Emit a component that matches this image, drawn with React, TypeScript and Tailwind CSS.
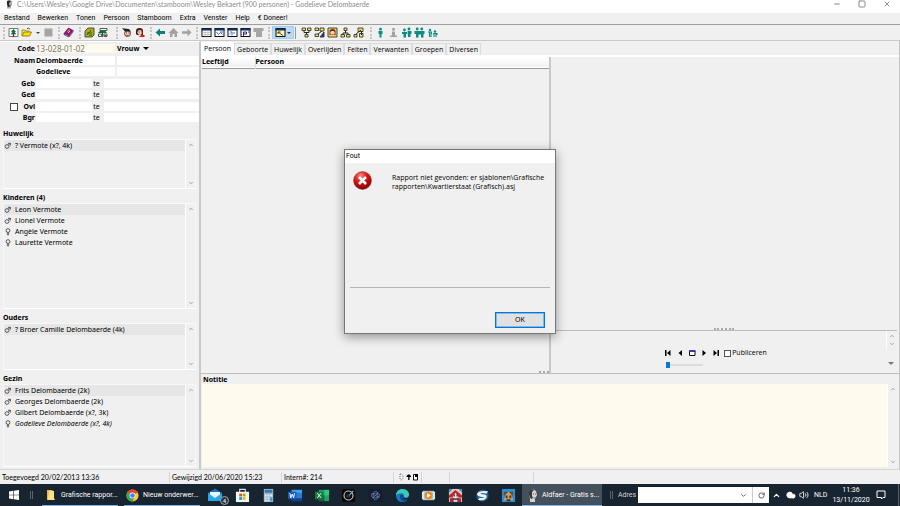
import type { ReactNode } from 'react';
import { ChevronDown, ChevronUp, Cloud, Minus, RotateCw, Square, Volume2, X } from 'lucide-react';

interface Person {
  name: string;
  sex: 'm' | 'f';
  current?: boolean;
}

const MENU = ['Bestand', 'Bewerken', 'Tonen', 'Persoon', 'Stamboom', 'Extra', 'Venster', 'Help', '€ Doneer!'];
const TABS = ['Persoon', 'Geboorte', 'Huwelijk', 'Overlijden', 'Feiten', 'Verwanten', 'Groepen', 'Diversen'];

const SPOUSES: Person[] = [{ name: '? Vermote (x?, 4k)', sex: 'm' }];
const CHILDREN: Person[] = [
  { name: 'Leon Vermote', sex: 'm' },
  { name: 'Lionel Vermote', sex: 'm' },
  { name: 'Angèle Vermote', sex: 'f' },
  { name: 'Laurette Vermote', sex: 'f' },
];
const PARENTS: Person[] = [{ name: '? Broer Camille Delombaerde (4k)', sex: 'm' }];
const FAMILY: Person[] = [
  { name: 'Frits Delombaerde (2k)', sex: 'm' },
  { name: 'Georges Delombaerde (2k)', sex: 'm' },
  { name: 'Gilbert Delombaerde (x?, 3k)', sex: 'm' },
  { name: 'Godelieve Delombaerde (x?, 4k)', sex: 'f', current: true },
];

function Icon({ children }: { children: ReactNode }) {
  return (
    <svg viewBox="0 0 11 11" className="w-[11px] h-[11px] shrink-0">
      {children}
    </svg>
  );
}

function Tool({ label, children }: { label: string; children: ReactNode }) {
  return (
    <button type="button" aria-label={label} className="w-[13px] h-[13px] flex items-center justify-center">
      <Icon>{children}</Icon>
    </button>
  );
}

function Grip() {
  return <span className="w-[2px] h-[12px] mr-[2px] border-l-2 border-dotted border-[#c4c4c4]" />;
}

function Sex({ sex }: { sex: 'm' | 'f' }) {
  return (
    <svg viewBox="0 0 8 8" className="w-2 h-2 shrink-0" fill="none" stroke="#333" strokeWidth="0.8">
      {sex === 'm' ? (
        <>
          <ellipse cx="3" cy="4.5" rx="2" ry="1.8" />
          <path d="M4.4 3.2 6.2 1.4M4 1.3h2.4v2.2" />
        </>
      ) : (
        <>
          <circle cx="4" cy="2.6" r="1.9" />
          <path d="M4 4.5v3M2.8 6h2.4" />
        </>
      )}
    </svg>
  );
}

function ScrollBar() {
  return (
    <div className="w-[10px] shrink-0 flex flex-col items-center justify-between py-[2px] text-[#a5a5a5] border-l border-white">
      <ChevronUp className="w-[6px] h-[6px]" strokeWidth={4} />
      <ChevronDown className="w-[6px] h-[6px]" strokeWidth={4} />
    </div>
  );
}

function PersonList({ title, people, className }: { title: string; people: Person[]; className: string }) {
  return (
    <section className={`flex flex-col ${className}`}>
      <h2 className="h-[13px] leading-[15px] font-bold">{title}</h2>
      <div className="flex-1 min-h-0 flex border border-[#f8f8f8] border-b-white">
        <ul className="flex-1 min-w-0">
          {people.map((p, i) => (
            <li
              key={p.name}
              className={`h-[11px] leading-[11px] flex items-center gap-[3px] whitespace-nowrap ${
                i === 0 ? 'bg-[#e6e6e6]' : ''
              } ${p.current ? 'italic' : ''}`}
            >
              <Sex sex={p.sex} />
              {p.name}
            </li>
          ))}
        </ul>
        <ScrollBar />
      </div>
    </section>
  );
}

function DateRow({ id, label, check }: { id: string; label: string; check?: boolean }) {
  return (
    <div className="flex items-center h-[9px]">
      <div className="w-[35px] flex items-center justify-end gap-[5px] pr-px font-bold">
        {check && (
          <input
            type="checkbox"
            aria-label="Overleden"
            className="appearance-none w-2 h-2 bg-white border border-[#444]"
          />
        )}
        <label htmlFor={id}>{label}</label>
      </div>
      <input id={id} className="w-14 h-[9px] bg-white outline-none" />
      <label htmlFor={`${id}-te`} className="w-3 pr-[3px] text-center">te</label>
      <input id={`${id}-te`} className="flex-1 min-w-0 h-[9px] bg-white outline-none" />
    </div>
  );
}

function PersonForm() {
  return (
    <form className="flex flex-col gap-[2px] pt-[2px] leading-[9px]">
      <div className="flex items-center h-[9px] mb-px">
        <label htmlFor="code" className="w-[35px] pr-px text-right font-bold">Code</label>
        <input
          id="code"
          defaultValue="13-028-01-02"
          className="w-[79px] h-[9px] bg-[#fffaee] text-[8px] text-[#777] outline-none"
        />
        <button type="button" className="flex items-center gap-1 pl-[2px] font-bold">
          Vrouw
          <span className="border-x-[3px] border-x-transparent border-t-[3px] border-t-black" />
        </button>
      </div>
      <div className="flex items-center h-[9px]">
        <label htmlFor="naam" className="w-[35px] pr-px text-right font-bold">Naam</label>
        <input id="naam" defaultValue="Delombaerde" className="w-[79px] h-[9px] bg-white font-bold outline-none" />
        <input aria-label="Voorvoegsel" className="flex-1 min-w-0 h-[9px] ml-[2px] bg-white outline-none" />
      </div>
      <div className="flex items-center h-[9px] pl-[35px] mb-px">
        <input aria-label="Voornaam" defaultValue="Godelieve" className="w-[79px] h-[9px] bg-white font-bold outline-none" />
        <input aria-label="Roepnaam" className="flex-1 min-w-0 h-[9px] ml-[2px] bg-white outline-none" />
      </div>
      <DateRow id="geb" label="Geb" />
      <DateRow id="ged" label="Ged" />
      <div className="h-px -mt-[2px]" />
      <DateRow id="ovl" label="Ovl" check />
      <DateRow id="bgr" label="Bgr" />
    </form>
  );
}

function WindowGlyph({ children, fill = '#fff' }: { children?: ReactNode; fill?: string }) {
  return (
    <>
      <rect x="1" y="1.5" width="9" height="8" fill={fill} stroke="#111" />
      <path d="M.5 2.5h10" stroke="#12305c" strokeWidth="2" />
      {children}
    </>
  );
}

function Toolbar() {
  return (
    <div className="h-[16px] shrink-0 flex items-center pl-[3px] border-b border-[#c9c9c9]">
      <Grip />
      <Tool label="Nieuw">
        <path d="M1 1.5h9v8H1z" fill="#fff" stroke="#777" />
        <path d="M5.5 2 3 5h1.5L2.5 7.3h6L6.5 5H8z" fill="#087038" />
        <path d="M5.5 7v3" stroke="#8a2020" strokeWidth="1.4" />
      </Tool>
      <Tool label="Openen">
        <path d="M1 9V3h3l1 1h3v2" fill="#ffe87c" stroke="#8a7b00" strokeWidth="0.8" />
        <path d="m1 9 2-4h7.5L8.5 9z" fill="#ffe100" stroke="#7c7000" strokeWidth="0.8" />
        <path d="M6 1.8q2-1.5 3 .6" fill="none" stroke="#222" strokeWidth="0.8" />
      </Tool>
      <button type="button" aria-label="Recente bestanden" className="w-[9px] flex justify-center">
        <span className="border-x-2 border-x-transparent border-t-2 border-t-[#444]" />
      </button>
      <Tool label="Opslaan"><path d="M1.5 1.5h8v8h-8z" fill="#a5a5a5" /></Tool>
      <span className="w-[3px]" />
      <Grip />
      <Tool label="Handleiding">
        <path d="M1 6.5 5.5 1 10 3.5 6 9z" fill="#9a1a8a" stroke="#4b0d45" strokeWidth="0.7" />
        <path d="M1 6.5 1.5 8 6 10l4-5V3.500L6 9z" fill="#fff" stroke="#4b0d45" strokeWidth="0.7" />
        <path d="m4.500 4.500 2-1.500M5 6l2-2" stroke="#ffb15a" />
      </Tool>
      <span className="w-1" />
      <Grip />
      <Tool label="Kaart">
        <path d="m1 4 3-3h6v7L8 10H1z" fill="#b3ab15" stroke="#333" strokeWidth="0.8" />
        <path d="M3 8c0-3 4-2 4-5M3 6h5M5 8h3" stroke="#176224" fill="none" strokeWidth="0.9" />
      </Tool>
      <Tool label="Boomweergave">
        <path d="M3 1.5h7v2H3zM1.5 7h3v2.5h-3zM7 7h3v2.500H7z" fill="#fff" stroke="#333" strokeWidth="0.8" />
        <path d="M1 6h9L8 3.500H3.500z" fill="#087038" />
        <path d="M5.500 5v5" stroke="#087038" strokeWidth="1.300" />
        <path d="M7.500 8.500h2" stroke="#b31515" />
      </Tool>
      <span className="w-[7px]" />
      <Grip />
      <Tool label="Man">
        <circle cx="6.5" cy="6.5" r="3" fill="#f4c7b5" stroke="#3a211a" strokeWidth="0.8" />
        <path d="m1 1 2 .5 5 .5 2 2.500H4z" fill="#222" />
        <path d="M5.500 8.500h2" stroke="#c22" strokeWidth="0.9" />
        <path d="M5 6h1M7.500 6h1" stroke="#111" strokeWidth="0.8" />
      </Tool>
      <Tool label="Vrouw">
        <path d="M2 7V4q0-3 3.500-3T9 4v4H3z" fill="#4a1512" />
        <circle cx="5.8" cy="5.5" r="2.400" fill="#f4c7b5" />
        <path d="M4.500 5h1M7 5h1" stroke="#111" strokeWidth="0.7" />
        <path d="M5 10h5.500V8L7.500 7.500z" fill="#d22323" />
      </Tool>
      <span className="w-1" />
      <Grip />
      <Tool label="Vorige"><path d="M.5 5.500 5 1.500v2.500h5v3H5v2.500z" fill="#08807c" /></Tool>
      <Tool label="Start"><path d="M.5 6 5.500 1l5 5H9v4H6.500V7h-2v3H2V6z" fill="#a3a3a3" /></Tool>
      <Tool label="Volgende"><path d="M10.500 5.500 6.500 1.500v2.800H1v2.400h5.500v2.800z" fill="#a3a3a3" /></Tool>
      <span className="w-[3px]" />
      <Grip />
      <Tool label="Tabel">
        <WindowGlyph><path d="M1 5.500h9M1 7.500h9M4 4v5.500M7 4v5.500" stroke="#aaa" strokeWidth="0.6" /></WindowGlyph>
      </Tool>
      <Tool label="Grafiek">
        <WindowGlyph><path d="m2.500 5 2 2.500 2-2 2 2M6 5h3" stroke="#2860d0" strokeWidth="0.9" fill="none" /></WindowGlyph>
      </Tool>
      <Tool label="Kaartje">
        <WindowGlyph><path d="M3 5h2v3.500M7 5v2M2.500 7h1" stroke="#2860d0" strokeWidth="0.9" fill="none" /></WindowGlyph>
      </Tool>
      <Tool label="Rapport">
        <WindowGlyph><path d="M3.500 9V5h3v2h-3M8 5h1" stroke="#2020a0" fill="none" /></WindowGlyph>
      </Tool>
      <Tool label="Sluiten"><path d="M.5 1h10v3H9v6H3V5H.5z" fill="#a5a5a5" /></Tool>
      <span className="w-[3px]" />
      <Grip />
      <button
        type="button"
        aria-label="Grafisch overzicht"
        className="w-[22px] h-[13px] flex items-center justify-between pl-[2px] pr-[2px] bg-[#b9daf5] border border-[#a2cdf0]"
      >
        <Icon>
          <WindowGlyph fill="#fff8a8">
            <path d="m3 5 5 3.500M3 7V5h2.500" stroke="#333" strokeWidth="0.9" fill="none" />
          </WindowGlyph>
        </Icon>
        <span className="border-x-2 border-x-transparent border-t-2 border-t-[#333]" />
      </button>
      <span className="w-px h-[12px] ml-px mr-1 bg-[#999]" />
      <Tool label="Kwartierstaat">
        <path d="M3 3.500v2h5v-2M5.500 5.500v3" stroke="#222" fill="none" />
        <path d="M1 1h3.500v2.500H1zM6.500 1H10v2.500H6.500zM4 7.500h3v2.500H4z" fill="#f4e45a" stroke="#222" strokeWidth="0.8" />
      </Tool>
      <Tool label="Parenteel">
        <path d="M1 1h3.500v2.500H1zM6 1h4v3H6zM1 7h3.500v2.500H1z" fill="#f4e45a" stroke="#222" strokeWidth="0.8" />
        <path d="m4 7 4-3" stroke="#222" />
        <path d="M6 10 10 5v5z" fill="#3a3a90" stroke="#222" strokeWidth="0.8" />
      </Tool>
      <Tool label="Portret">
        <path d="M1 1h9v9H1z" fill="#f2dc5a" stroke="#333" strokeWidth="0.9" />
        <path d="M2.500 8V4.500q0-2.500 3-2.500t3 2.500V8z" fill="#6b1f1f" />
        <circle cx="5.5" cy="6" r="2.300" fill="#ffcdb8" />
        <path d="M4.500 7.500h2" stroke="#d22" strokeWidth="0.8" />
      </Tool>
      <Tool label="Stamboom">
        <path d="M3 7.500V6h5v1.500M5.500 6V3.500" stroke="#222" fill="none" />
        <path d="M4 1h3v2.500H4zM1 7.500h3.500V10H1zM6.500 7.500H10V10H6.500z" fill="#f4e45a" stroke="#222" strokeWidth="0.8" />
      </Tool>
      <Tool label="Afstammelingen">
        <path d="M5 1h5v3.500H5zM1 7.500h3V10H1zM6.500 6.500H10V10H6.500z" fill="#f4e45a" stroke="#222" strokeWidth="0.8" />
        <path d="M2.500 7.500 8 3M8.500 4v4" stroke="#222" />
      </Tool>
      <span className="w-[5px]" />
      <Grip />
      <Tool label="Persoon toevoegen">
        <path d="M3.500 4h4v3H6.500v3.500h-2V7h-1z" fill="#0b8a86" />
        <circle cx="5.5" cy="2.200" r="1.400" fill="#0b8a86" />
      </Tool>
      <Tool label="Persoon verwijderen">
        <circle cx="5.5" cy="2.200" r="1.500" fill="#a3a3a3" />
        <path d="M4 4.500h3v4h2V10H2V8.500h2z" fill="#a3a3a3" />
      </Tool>
      <Tool label="Partner">
        <circle cx="3.5" cy="3" r="1.400" fill="#0b8a86" />
        <circle cx="8" cy="2" r="1.400" fill="#0b8a86" />
        <path d="M1 5h5v2H5v3.500H2.500V7H1zM6.500 4H10.500v3H9.500v3H7z" fill="#0b8a86" />
      </Tool>
      <Tool label="Ouders">
        <circle cx="3.2" cy="2" r="1.400" fill="#0b8a86" />
        <circle cx="7.8" cy="2" r="1.400" fill="#0b8a86" />
        <path d="M.5 4h10v3H9.500v3.500H7V7.500H4.500v3H2V7H.5z" fill="#0b8a86" />
      </Tool>
      <Tool label="Kinderen">
        <circle cx="3" cy="3" r="1.200" fill="#0b8a86" />
        <circle cx="8" cy="4.500" r="1.200" fill="#0b8a86" />
        <path d="M1 5h3.500v2M2.500 5v5M4 6v4M6 6.500h4V8M7 7v3M9 7v3" stroke="#0b8a86" strokeWidth="1.100" fill="none" />
      </Tool>
    </div>
  );
}

function MediaPanel() {
  return (
    <div className="h-[43px] flex border-t border-[#bdbdbd]">
      <div className="flex-1 flex flex-col items-center justify-end gap-[5px] pb-[5px] pr-[5px]">
        <div className="flex items-center gap-[4px] h-2">
          <button type="button" aria-label="Eerste" className="w-2">
            <svg viewBox="0 0 8 8" className="w-2 h-2"><path d="M1 1h1.500v6H1zM6.500 1v6L3 4z" /></svg>
          </button>
          <button type="button" aria-label="Vorige" className="w-2">
            <svg viewBox="0 0 8 8" className="w-2 h-2"><path d="M6 1v6L2.500 4z" /></svg>
          </button>
          <button type="button" aria-label="Venster" className="w-2">
            <svg viewBox="0 0 8 8" className="w-2 h-2">
              <path d="M1.500 2h5.500v4.500H1.500z" fill="#fff" stroke="#111" />
              <path d="M1 2h6.500" stroke="#2727b5" strokeWidth="1.500" />
            </svg>
          </button>
          <button type="button" aria-label="Volgende" className="w-2">
            <svg viewBox="0 0 8 8" className="w-2 h-2"><path d="M2.500 1v6L6 4z" /></svg>
          </button>
          <button type="button" aria-label="Laatste" className="w-2">
            <svg viewBox="0 0 8 8" className="w-2 h-2"><path d="M5.500 1H7v6H5.500zM1.500 1v6L5 4z" /></svg>
          </button>
          <label className="flex items-center gap-px font-['Open_Sans']">
            <input type="checkbox" className="appearance-none w-[7px] h-[7px] bg-white border border-[#555]" />
            Publiceren
          </label>
        </div>
        <div className="w-[100px]">
          <input
            type="range"
            aria-label="Zoom"
            defaultValue={0}
            className="block appearance-none w-[37px] h-[6px] bg-[linear-gradient(#dcdcdc,#dcdcdc)] bg-[length:100%_2px] bg-center bg-no-repeat [&::-webkit-slider-thumb]:appearance-none [&::-webkit-slider-thumb]:w-1 [&::-webkit-slider-thumb]:h-[6px] [&::-webkit-slider-thumb]:bg-[#0a78d6]"
          />
        </div>
      </div>
      <div className="w-[12px] flex flex-col items-center justify-between pb-2">
        <div className="h-[18px] flex"><ScrollBar /></div>
        <span className="border-x-[3px] border-x-transparent border-t-[3px] border-t-[#777]" />
      </div>
    </div>
  );
}

function ErrorDialog() {
  return (
    <div className="absolute inset-0 flex items-center justify-center pb-[2px]">
      <div
        role="alertdialog"
        aria-labelledby="fout"
        className="w-[212px] h-[185px] flex flex-col bg-[#f0f0f0] border border-[#777] shadow-[0_3px_10px_rgba(0,0,0,0.4)]"
      >
        <h1 id="fout" className="h-[13px] pl-px leading-[13px] bg-white font-['Roboto']">Fout</h1>
        <div className="flex-1 flex pt-2 pl-2">
          <svg viewBox="0 0 19 19" className="w-[19px] h-[19px] shrink-0">
            <defs>
              <radialGradient id="red" cx="0.4" cy="0.25" r="0.8">
                <stop offset="0" stopColor="#ff8a80" />
                <stop offset="0.45" stopColor="#d91414" />
                <stop offset="1" stopColor="#7c0000" />
              </radialGradient>
            </defs>
            <circle cx="9.5" cy="9.5" r="9" fill="url(#red)" stroke="#8c3a3a" strokeWidth="0.5" />
            <path d="m6 6 7 7M13 6l-7 7" stroke="#fff" strokeWidth="2.600" />
          </svg>
          <p className="pl-[20px] pt-[2px] leading-[9px] font-['Open_Sans']">
            Rapport niet gevonden: er sjablonen\Grafische
            <br />
            rapporten\Kwartierstaat (Grafisch).asj
          </p>
        </div>
        <div className="mx-[5px] h-[46px] pt-6 pr-[5px] flex items-start justify-end border-t border-[#b5b5b5]">
          <button
            type="button"
            className="w-[50px] h-[16px] bg-[#e1e1e1] border border-[#0078d7] shadow-[inset_0_0_0_1px_#7db8e6] leading-3"
          >
            OK
          </button>
        </div>
      </div>
    </div>
  );
}

function TaskIcon({ label, children }: { label: string; children: ReactNode }) {
  return (
    <button type="button" aria-label={label} className="flex-1 h-full flex items-center justify-center">
      <svg viewBox="0 0 16 16" className="w-[15px] h-[15px]">{children}</svg>
    </button>
  );
}

function Taskbar() {
  return (
    <footer className="h-[22px] shrink-0 flex items-center bg-[#182430] text-white font-['Roboto'] whitespace-nowrap">
      <button type="button" aria-label="Start" className="w-[27px] flex justify-center">
        <svg viewBox="0 0 10 10" className="w-[10px] h-[10px]" fill="#fff">
          <path d="M0 1.400 4.400.8v3.900H0zM5 .7 10 0v4.700H5zM0 5.300h4.400v3.900L0 8.600zM5 5.300h5V10l-5-.7z" />
        </svg>
      </button>
      <span className="w-[3px] h-2 ml-[3px] mr-[9px] border-x border-[#5b656e]" />
      <button type="button" className="w-[76px] h-full pl-1 pt-px flex items-center gap-1 border-b border-[#76b9ed]">
        <svg viewBox="0 0 11 12" className="w-[11px] h-3 shrink-0">
          <path d="M1 1h5l1 1v9H1z" fill="#e5b94a" />
          <path d="M3 2h5v7l1 2H2z" fill="#ffe08a" />
        </svg>
        Grafische rappor...
      </button>
      <button type="button" className="w-[76px] h-full ml-[6px] pl-[2px] pt-px flex items-center gap-1 border-b border-[#76b9ed]">
        <svg viewBox="0 0 14 14" className="w-[13px] h-[13px] shrink-0">
          <circle cx="7" cy="7" r="6.500" fill="#fcc934" />
          <path d="M7 7 1.370 3.750A6.500 6.500 0 0 1 12.630 3.750z" fill="#ea4335" />
          <path d="M7 7 1.370 3.750A6.500 6.500 0 0 0 7 13.500l2.600-5z" fill="#34a853" />
          <path d="M7 4h5.700L12 3H6z" fill="#ea4335" />
          <circle cx="7" cy="7" r="3.200" fill="#fff" />
          <circle cx="7" cy="7" r="2.500" fill="#4285f4" />
        </svg>
        Nieuw onderwer...
      </button>
      <button type="button" aria-label="Mail" className="flex-none w-[29px] h-full flex items-center justify-center relative">
        <svg viewBox="0 0 16 16" className="w-4 h-4">
          <path d="M1 6 8 1.500 15 6v8H1z" fill="#1773bd" />
          <path d="M3 5h10v4l-5 3-5-3z" fill="#e9f5ff" />
          <path d="m1 6 7 5 7-5v8H1z" fill="#28a8ea" />
        </svg>
        <span className="absolute right-0 bottom-px w-[9px] h-[9px] rounded-full border border-[#9aa] bg-[#26343f] text-[6px] leading-[7px] text-center">4</span>
      </button>
      <div className="flex-none w-[293px] h-full flex">
        <TaskIcon label="Store">
          <path d="M5 5V1.500h6V5" fill="none" stroke="#ddd" strokeWidth="1.200" />
          <path d="M1 4h14v11H1z" fill="#f5f5f5" />
          <path d="M4.500 6h3v3h-3z" fill="#f25022" /><path d="M8.200 6h3v3h-3z" fill="#7fba00" />
          <path d="M4.500 9.700h3v3h-3z" fill="#00a4ef" /><path d="M8.200 9.700h3v3h-3z" fill="#ffb900" />
        </TaskIcon>
        <TaskIcon label="Rekenmachine">
          <path d="M3 1h10v14H3z" fill="#9bb7c9" /><path d="M4 2h8v3H4z" fill="#2e7cb0" />
          <path d="M4 7h2v2H4zM7 7h2v2H7zM4 10h2v1.500H4zM7 10h2v1.500H7zM4 12.500h2V14H4zM7 12.500h2V14H7zM10 7h2v2h-2z" fill="#e9f1f6" />
          <path d="M10 10h2v4h-2z" fill="#2e9be0" />
        </TaskIcon>
        <TaskIcon label="Word">
          <path d="M4 2h11v12H4z" fill="#2b7cd3" /><path d="M4 2h11v3H4z" fill="#41a5ee" /><path d="M4 11h11v3H4z" fill="#103f91" />
          <path d="M0 4h9v8H0z" fill="#185abd" /><path d="m2 5.500 1 5 1.500-4 1.500 4 1-5" stroke="#fff" fill="none" />
        </TaskIcon>
        <TaskIcon label="Excel">
          <path d="M4 2h11v12H4z" fill="#21a366" /><path d="M10 2h5v6h-5z" fill="#33c481" /><path d="M4 8h6v6H4z" fill="#185c37" />
          <path d="M0 4h9v8H0z" fill="#107c41" /><path d="m2.500 5.500 4 5M6.500 5.500l-4 5" stroke="#fff" />
        </TaskIcon>
        <TaskIcon label="Foto-editor">
          <rect x="1" y="1" width="14" height="14" rx="2" fill="#08090c" />
          <circle cx="8" cy="8" r="4.800" fill="none" stroke="#c9b9a1" strokeWidth="1.300" />
          <path d="m8 9 5-6" stroke="#6cb9e8" strokeWidth="1.300" /><circle cx="7.5" cy="8.500" r="2" fill="#24364a" />
        </TaskIcon>
        <TaskIcon label="Elements">
          <rect x="1" y="1" width="14" height="14" rx="1" fill="#161a35" />
          <g fill="none" stroke="#6f93b8" strokeWidth="0.7">
            <ellipse cx="8" cy="8" rx="4.500" ry="2.500" /><ellipse cx="8" cy="8" rx="2.500" ry="4.500" /><path d="m4 6 8 4M11 5l-6 6" />
          </g>
        </TaskIcon>
        <TaskIcon label="Edge">
          <circle cx="8" cy="8" r="7" fill="#1478c8" />
          <path d="M1 8C1 3.500 4.500 1 8 1c4 0 7 3 7 6 0 2-1.500 3-3.500 3-1.500 0-2-.6-2-1.200C10 8 9.800 5.500 6.800 5.500 4 5.500 1.500 6.500 1 8z" fill="#3ccbb0" />
          <path d="M6 7c-2 3 .5 7.500 4.500 7.300 2 0 3.500-1.800 4-3-1.500 1-5.500 1.300-6.500-1C7.500 9 8 8 8.500 7.500z" fill="#0c4a92" />
          <path d="M9 8c-.8 1.500.5 2.600 2 2.700 1.800 0 3.500-.6 4-1.700v3l-3.500.4C9 12.500 7.500 10 8 8z" fill="#182430" />
        </TaskIcon>
        <TaskIcon label="Mediaspeler">
          <path d="M2 3h12v10H2z" fill="#9fd0ee" /><path d="M1 4h2v8H1zM13 4h2v8h-2z" fill="#dcecf6" />
          <circle cx="8" cy="8" r="4.200" fill="#f28a1e" /><path d="m6.500 5.500 4 2.500-4 2.500z" fill="#fff" />
        </TaskIcon>
        <TaskIcon label="Stamboomspel">
          <path d="M1 1h14v14H1z" fill="#d9c9c2" /><path d="m1 8 7-6 7 6v2H1z" fill="#c22222" />
          <path d="M2 11h4v4H2zM10 11h4v4h-4z" fill="#b02525" /><path d="m5 9 3-4 3 4-3 4z" fill="#f5e6dc" />
          <path d="M6 7h1.500v2H6zM9 7h1.500v2H9zM5 11h6v1.500H5z" fill="#2e3d66" /><path d="M1 1h4L1 5zM15 1h-4l4 4z" fill="#3d8fc4" />
        </TaskIcon>
        <TaskIcon label="Synchronisatie">
          <circle cx="8" cy="8" r="6.500" fill="#215e90" />
          <path d="M2 6.500Q4 2 14 3.500L12 6q-5-1.500-6 .5 7 0 6.500 3-2 5-9.500 3l2-2q4 .8 5-.8-7 .5-8-3.200z" fill="#e7f3fb" />
        </TaskIcon>
        <TaskIcon label="Archief">
          <path d="M1 1h14v14H1z" fill="#2b8fd0" /><path d="M3 4h4v4H3zM9 4h4v4H9z" fill="#6b4a30" />
          <path d="m3 13 2-6 3-3 3 3 2 6z" fill="#d0a063" /><path d="M5 8h2v3H5zM9 8h2v3H9zM6 12h4v2H6z" fill="#4b301c" />
        </TaskIcon>
      </div>
      <button type="button" className="flex-none w-[80px] h-full pl-[6px] pt-px flex items-center gap-1 bg-[#44515c] border-b border-[#76b9ed]">
        <svg viewBox="0 0 10 13" className="w-[10px] h-[13px] shrink-0">
          <path d="M2 2q3-3 6 0l1 4-2 4v3H2V9L1 5z" fill="#d2d2d0" />
          <path d="M1 3q1-3 5-2L4 3v4l1 2-2 1-2-4z" fill="#363636" />
          <path d="M5 5h1M7 5h1M5.500 9h2" stroke="#363636" strokeWidth="0.7" />
        </svg>
        Aldfaer - Gratis s...
      </button>
      <span className="w-[3px] h-2 ml-2 mr-[5px] border-x border-[#5b656e]" />
      <label htmlFor="adres" className="w-5 shrink-0 text-[#d0d4d8]">Adres</label>
      <div className="flex-1 min-w-0 h-[16px] flex items-center bg-white text-[#555]">
        <input id="adres" className="flex-1 min-w-0 h-full outline-none" />
        <ChevronDown className="w-[7px] h-[7px] mr-[5px]" strokeWidth={3} />
        <button type="button" aria-label="Vernieuwen" className="w-[17px] h-full flex items-center justify-center border-l border-[#ccc]">
          <RotateCw className="w-[7px] h-[7px]" strokeWidth={3} />
        </button>
      </div>
      <div className="flex-none flex items-center pl-[3px]">
        <ChevronUp className="w-[9px] h-[9px] mr-[5px]" strokeWidth={3} />
        <Cloud className="w-[10px] h-[10px] mr-[3px]" fill="#fff" />
        <Volume2 className="w-[10px] h-[10px] mr-[5px]" />
        <span className="w-[18px]">NLD</span>
        <time className="w-[38px] text-center leading-[10px]">11:36<br />13/11/2020</time>
        <button type="button" aria-label="Meldingen" className="w-[22px] flex justify-center">
          <svg viewBox="0 0 10 10" className="w-[10px] h-[10px]" fill="none" stroke="#fff">
            <path d="M1 1h8v6.500H7L5.500 9V7.500H1z" />
          </svg>
        </button>
        <span className="w-px h-[22px] ml-[6px] mr-px bg-[#56616b]" />
      </div>
    </footer>
  );
}

export default function App() {
  return (
    <div className="h-screen flex flex-col overflow-hidden bg-[#f0f0f0] text-[7px] text-black font-['Noto_Sans','Open_Sans',sans-serif] cursor-default">
      <div className="relative flex-1 min-h-0 flex flex-col">
        <header className="h-[13px] shrink-0 flex items-start bg-white text-[#8c8c8c]">
          <svg viewBox="0 0 7 9" className="w-[7px] h-[9px] ml-[6px] mr-1">
            <path d="M1 1q2-1.500 5 0v4L5 6v2.500H1V6z" fill="#aaa" />
            <path d="M1 1q2-1 4 0L3 3v2l2 1-3 1-1-3z" fill="#222" />
          </svg>
          <span className="flex-1 leading-[9px] font-['Lato']">
            C:\Users\Wesley\Google Drive\Documenten\stamboom\Wesley Bekaert (900 personen) - Godelieve Delombaerde
          </span>
          <div className="flex gap-[17px] pr-[9px]">
            <button type="button" aria-label="Minimaliseren"><Minus className="w-2 h-2" strokeWidth={3} /></button>
            <button type="button" aria-label="Maximaliseren"><Square className="w-2 h-2" strokeWidth={3} /></button>
            <button type="button" aria-label="Sluiten"><X className="w-2 h-2" strokeWidth={3} /></button>
          </div>
        </header>

        <nav className="h-3 shrink-0 flex items-center gap-2 pl-1 border-b border-[#9f9f9f] font-['Roboto']">
          {MENU.map((item) => (
            <button key={item} type="button" className="leading-[11px]">{item}</button>
          ))}
        </nav>

        <Toolbar />

        <main className="flex-1 min-h-0 flex">
          <aside className="w-[201px] shrink-0 flex flex-col pl-[1px] border-t border-white border-r-2 border-r-[#c9c9c9]">
            <PersonForm />
            <div className="flex-1 min-h-0 flex flex-col gap-[1px] pl-[2px] pr-[3px] pt-[4px] pb-[2px]">
              <PersonList title="Huwelijk" people={SPOUSES} className="h-[63px]" />
              <PersonList title="Kinderen (4)" people={CHILDREN} className="flex-1" />
              <PersonList title="Ouders" people={PARENTS} className="h-[60px]" />
              <PersonList title="Gezin" people={FAMILY} className="h-[96px]" />
            </div>
          </aside>

          <div className="flex-1 min-w-0 flex flex-col border-r border-[#c9c9c9]">
            <div role="tablist" className="h-[14px] shrink-0 flex items-end font-['Open_Sans']">
              {TABS.map((tab, i) => (
                <button
                  key={tab}
                  type="button"
                  role="tab"
                  aria-selected={i === 0}
                  className={
                    i === 0
                      ? 'h-[13px] px-[3px] bg-white leading-[12px]'
                      : 'h-3 px-[2px] border border-b-0 border-[#dcdcdc] leading-[11px]'
                  }
                >
                  {tab}
                </button>
              ))}
            </div>
            <div className="flex-1 min-h-0 flex border-t-2 border-white border-b border-b-[#bdbdbd]">
              <div className="w-[calc(50%+1px)] flex flex-col pl-px border-r-2 border-[#c9c9c9]">
                <table className="w-full table-fixed text-left">
                  <thead>
                    <tr className="h-[11px] bg-gradient-to-b from-white to-[#f0f0f0] border-b border-[#999]">
                      <th className="w-[53px] leading-[10px] border-r border-[#ddd]">Leeftijd</th>
                      <th className="leading-[10px]">Persoon</th>
                    </tr>
                  </thead>
                </table>
                <div className="flex-1 flex items-end justify-end">
                  <span className="w-[10px] border-b-2 border-dotted border-[#aaa]" />
                </div>
              </div>
              <div className="flex-1 flex flex-col pr-[2px]">
                <div className="flex-1 flex items-end justify-center">
                  <span className="w-5 border-b-2 border-dotted border-[#aaa]" />
                </div>
                <MediaPanel />
              </div>
            </div>
            <div className="h-[95px] shrink-0 flex flex-col pl-px pr-[2px] pb-[2px]">
              <label htmlFor="notitie" className="h-[10px] pl-px leading-[11px] font-bold">Notitie</label>
              <div className="flex-1 flex">
                <textarea id="notitie" className="flex-1 resize-none bg-[#fffaee] outline-none" />
                <ScrollBar />
              </div>
            </div>
          </div>
        </main>

        <div className="h-[15px] shrink-0 flex items-center pl-[2px] border-t border-[#d5d5d5] leading-[11px] font-['Lato']">
          <span className="w-[168px] border-r border-[#d5d5d5]">Toegevoegd 20/02/2013 13:36</span>
          <span className="w-[112px] pl-[2px] border-r border-[#d5d5d5]">Gewijzigd 20/06/2020 15:23</span>
          <span className="w-[112px] pl-[2px] border-r border-[#d5d5d5]">Intern#: 214</span>
          <span className="w-[28px] h-[11px] pl-1 flex items-center border-r border-[#d5d5d5]">
            <svg viewBox="0 0 22 8" className="w-[22px] h-2">
              <path d="M2 1v6M2 1q3 0 3 3T2 7" fill="none" stroke="#555" strokeWidth="0.8" strokeDasharray="1 1" />
              <path d="M8.500 3 10 1.500h1.500L13 3v1h-1.500v3h-1.300V4H8.500z" />
              <path d="M15.500 1.500h4v5.500h-4z" fill="#fff" stroke="#111" /><path d="M17 1h3v3h-3z" />
            </svg>
          </span>
          <span className="w-[28px] h-[11px] border-r border-[#d5d5d5]" />
          <span className="w-[84px] h-[11px] border-r border-[#d5d5d5]" />
        </div>

        <ErrorDialog />
      </div>
      <Taskbar />
    </div>
  );
}
